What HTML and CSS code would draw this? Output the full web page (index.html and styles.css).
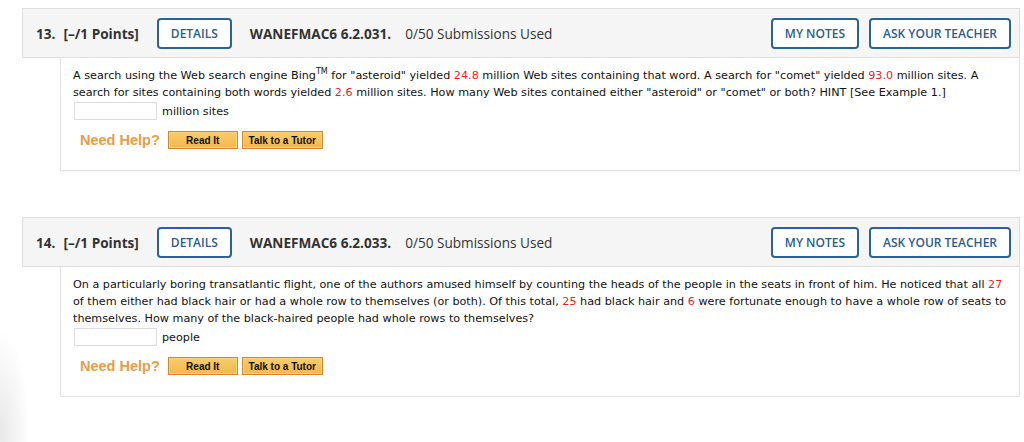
FILE: index.html
```html
<!DOCTYPE html>
<html>
<head>
<meta charset="utf-8">
<link rel="stylesheet" href="styles.css">
</head>
<body>
<div class="page">
  <div class="question">
    <div class="q-head">
      <span class="q-num">13.</span>
      <span class="q-pts">[–/1 Points]</span>
      <span class="btn first">DETAILS</span>
      <span class="q-code">WANEFMAC6 6.2.031.</span>
      <span class="q-subs">0/50 Submissions Used</span>
      <span class="spacer"></span>
      <span class="btn">MY NOTES</span>
      <span class="btn">ASK YOUR TEACHER</span>
    </div>
    <div class="q-body">
      <p class="q-text">A search using the Web search engine Bing<sup>TM</sup> for "asteroid" yielded <span class="red">24.8</span> million Web sites containing that word. A search for "comet" yielded <span class="red">93.0</span> million sites. A search for sites containing both words yielded <span class="red">2.6</span> million sites. How many Web sites contained either "asteroid" or "comet" or both? HINT [See Example 1.]</p>
      <div class="answer"><span class="box"></span><span>million sites</span></div>
      <div class="help">
        <span class="need">Need Help?</span>
        <span class="hbtn read">Read It</span>
        <span class="hbtn tutor">Talk to a Tutor</span>
      </div>
    </div>
  </div>

  <div class="question q2">
    <div class="q-head">
      <span class="q-num">14.</span>
      <span class="q-pts">[–/1 Points]</span>
      <span class="btn first">DETAILS</span>
      <span class="q-code">WANEFMAC6 6.2.033.</span>
      <span class="q-subs">0/50 Submissions Used</span>
      <span class="spacer"></span>
      <span class="btn">MY NOTES</span>
      <span class="btn">ASK YOUR TEACHER</span>
    </div>
    <div class="q-body">
      <p class="q-text">On a particularly boring transatlantic flight, one of the authors amused himself by counting the heads of the people in the seats in front of him. He noticed that all <span class="red">27</span> of them either had black hair or had a whole row to themselves (or both). Of this total, <span class="red">25</span> had black hair and <span class="red">6</span> were fortunate enough to have a whole row of seats to themselves. How many of the black-haired people had whole rows to themselves?</p>
      <div class="answer"><span class="box"></span><span>people</span></div>
      <div class="help">
        <span class="need">Need Help?</span>
        <span class="hbtn read">Read It</span>
        <span class="hbtn tutor">Talk to a Tutor</span>
      </div>
    </div>
  </div>
</div>
<div class="shade"></div>
</body>
</html>
```

FILE: styles.css
```css
html, body {
  margin: 0;
  padding: 0;
  background: #ffffff;
}
.page {
  padding: 8px 4px 0 22px;
}
.question {
  width: 998px;
}
.q2 {
  margin-top: 46px;
}
.q-head {
  box-sizing: border-box;
  height: 50px;
  display: flex;
  align-items: center;
  background: #f5f5f5;
  border: 1px solid #dedede;
  padding: 0 8px 0 13px;
  font-family: "Open Sans", sans-serif;
  font-size: 13.6px;
  color: #333;
}
.q-num {
  font-weight: 700;
  margin-right: 8px;
}
.q-pts {
  font-weight: 700;
  margin-right: 18px;
}
.q-code {
  font-weight: 700;
  margin-left: 18px;
  margin-right: 14px;
}
.q-subs {
  font-weight: 400;
}
.spacer {
  flex: 1;
}
.btn {
  box-sizing: border-box;
  height: 31px;
  display: inline-flex;
  align-items: center;
  justify-content: center;
  padding: 0 12px;
  border: 2px solid #2a6496;
  border-radius: 4px;
  background: #fff;
  color: #2a5d8c;
  font-weight: 600;
  font-size: 12px;
  margin-left: 10px;
}
.btn.first {
  margin-left: 0;
}
.q-body {
  box-sizing: border-box;
  margin-left: 38px;
  width: 960px;
  border: 1px solid #e3e3e3;
  border-top: none;
  box-shadow: 0 1px 1px rgba(0,0,0,0.04);
  padding: 9px 12px 20px 12px;
  font-family: "DejaVu Sans", Verdana, sans-serif;
  font-size: 11.2px;
  line-height: 17px;
  color: #111;
}
.q-text {
  margin: 0;
}
.q-text sup {
  font-size: 8px;
  line-height: 0;
  vertical-align: 5px;
}
.red {
  color: #e32424;
}
.answer {
  display: flex;
  align-items: center;
  height: 18px;
  margin-top: 1px;
}
.box {
  box-sizing: border-box;
  width: 83px;
  height: 18px;
  border: 1px solid #dcdcdc;
  margin-left: 1px;
  margin-right: 5px;
  background: #fff;
}
.help {
  display: flex;
  align-items: center;
  margin-top: 10px;
  height: 20px;
}
.need {
  font-family: "Liberation Sans", Arial, sans-serif;
  font-weight: 700;
  font-size: 14.5px;
  color: #ef9a45;
  margin-left: 7px;
  margin-right: 8px;
}
.hbtn {
  box-sizing: border-box;
  height: 18px;
  display: inline-flex;
  align-items: center;
  justify-content: center;
  background: linear-gradient(#f8cc6a, #f3b84e);
  border: 1px solid #d4862e;
  box-shadow: inset 0 0 0 1px #f9d27c;
  font-family: "Liberation Sans", Arial, sans-serif;
  font-weight: 700;
  font-size: 10px;
  color: #111;
}
.read {
  width: 70px;
}
.tutor {
  width: 81px;
  margin-left: 4px;
}
.shade {
  position: fixed;
  left: -30px;
  top: 330px;
  width: 60px;
  height: 200px;
  background: radial-gradient(ellipse at center, rgba(0,0,0,0.09), rgba(0,0,0,0) 70%);
  pointer-events: none;
}
```
